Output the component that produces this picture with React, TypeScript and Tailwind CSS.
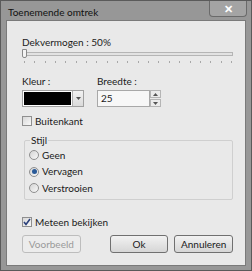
import React from "react";

function Radio({ checked, label }: { checked?: boolean; label: string }) {
  return (
    <div className="flex items-center h-[16.5px]">
      <div className="w-[10px] h-[10px] rounded-full border border-[#8f8f8f] bg-gradient-to-br from-[#d4d4d4] to-[#f8f8f8] flex items-center justify-center">
        {checked && <div className="w-[5px] h-[5px] rounded-full bg-[#2a5a98]" />}
      </div>
      <span className="ml-[3px] text-[10px] text-[#1a1a1a]">{label}</span>
    </div>
  );
}

function Check({ checked, label }: { checked?: boolean; label: string }) {
  return (
    <div className="flex items-center h-[14px]">
      <div className="w-[10px] h-[10px] border border-[#8f8f8f] bg-gradient-to-br from-[#d8d8d8] to-[#f8f8f8] flex items-center justify-center">
        {checked && (
          <svg width="8" height="8" viewBox="0 0 8 8">
            <path d="M1 4 L3 6.5 L7 1" stroke="#2a3f7a" strokeWidth="1.6" fill="none" />
          </svg>
        )}
      </div>
      <span className="ml-[3px] text-[10px] text-[#1a1a1a]">{label}</span>
    </div>
  );
}

export default function App() {
  const ticks = Array.from({ length: 21 }, (_, i) => i);
  return (
    <div
      className="w-[252px] h-[271px] bg-[#979797] border border-[#5a5a5a] flex flex-col"
      style={{ fontFamily: 'Lato, "Liberation Sans", sans-serif' }}
    >
      <div className="h-[19px] flex items-start justify-between pl-[7px] pr-[4px]">
        <span className="text-[10px] leading-[14px] text-[#111] mt-[4px]">Toenemende omtrek</span>
        <div className="w-[38px] h-[16px] border border-[#6a6a6a] border-t-0 rounded-b-[4px] bg-[#a4a4a4] flex items-center justify-center">
          <span className="text-[11px] font-bold text-white leading-none">✕</span>
        </div>
      </div>
      <div className="flex-1 mx-[5px] mb-[4px] border border-[#7a7a7a] bg-[#e9e9e9] pl-[15px] pr-[12px] pt-[14px] flex flex-col">
        <div className="text-[10px] leading-[14px] text-[#1a1a1a]">Dekvermogen : 50%</div>
        <div className="relative h-[9px]">
          <div className="absolute left-0 right-0 top-[3px] h-[4px] border border-[#b5b5b5] bg-[#e2e2e2]" />
          <div className="absolute left-[0px] top-[0px] w-[5px] h-[9px] border border-[#8a8a8a] bg-[#f4f4f4] rounded-b-[2px]" />
        </div>
        <div className="flex justify-between h-[6px] pl-[2px] pr-[1px]">
          {ticks.map((t) => (
            <div key={t} className="w-[1px] h-[2px] mt-[3px] bg-[#a8a8a8]" />
          ))}
        </div>
        <div className="flex mt-[10px]">
          <div className="flex flex-col w-[75px]">
            <span className="text-[10px] leading-[14px] text-[#1a1a1a]">Kleur :</span>
            <div className="mt-[2px] w-[62px] h-[17px] border border-[#a0a0a0] bg-white flex">
              <div className="flex-1 m-[1px] bg-black" />
              <div className="w-[11px] border-l border-[#b0b0b0] bg-gradient-to-b from-[#f2f2f2] to-[#dadada] flex items-center justify-center">
                <svg width="5" height="3" viewBox="0 0 5 3">
                  <path d="M0 0 L5 0 L2.5 3 Z" fill="#555" />
                </svg>
              </div>
            </div>
          </div>
          <div className="flex flex-col">
            <span className="text-[10px] leading-[14px] text-[#1a1a1a]">Breedte :</span>
            <div className="mt-[2px] flex">
              <div className="w-[53px] h-[17px] border border-[#a8a8a8] bg-[#f7f7f7] text-[10px] leading-[15px] pl-[3px] text-[#1a1a1a]">25</div>
              <div className="flex flex-col w-[11px] h-[17px]">
                <div className="h-[8px] border border-[#b5b5b5] bg-[#ececec] flex items-center justify-center">
                  <svg width="5" height="3" viewBox="0 0 5 3"><path d="M0 3 L5 3 L2.5 0 Z" fill="#555" /></svg>
                </div>
                <div className="h-[8px] mt-[1px] border border-[#b5b5b5] bg-[#ececec] flex items-center justify-center">
                  <svg width="5" height="3" viewBox="0 0 5 3"><path d="M0 0 L5 0 L2.5 3 Z" fill="#555" /></svg>
                </div>
              </div>
            </div>
          </div>
        </div>
        <div className="mt-[7px]">
          <Check label="Buitenkant" />
        </div>
        <div className="relative mt-[12px] ml-[2px] h-[60px] border border-[#cfcfcf] rounded-[2px] pl-[4px] pt-[6px] flex flex-col">
          <span className="absolute left-[5px] top-[-8px] px-[1px] bg-[#e9e9e9] text-[10px] leading-[14px] text-[#1a1a1a]">Stijl</span>
          <Radio label="Geen" />
          <Radio checked label="Vervagen" />
          <Radio label="Verstrooien" />
        </div>
        <div className="mt-[15px]">
          <Check checked label="Meteen bekijken" />
        </div>
        <div className="flex mt-[6px]">
          <div className="w-[59px] h-[18px] border border-[#bdbdbd] rounded-[3px] bg-[#ececec] text-[10px] leading-[16px] text-center text-[#9a9a9a]">Voorbeeld</div>
          <div className="ml-[29px] w-[59px] h-[18px] border border-[#707070] rounded-[3px] bg-gradient-to-b from-[#f2f2f2] to-[#d6d6d6] text-[10px] leading-[16px] text-center text-[#1a1a1a]">Ok</div>
          <div className="ml-[6px] w-[59px] h-[18px] border border-[#707070] rounded-[3px] bg-gradient-to-b from-[#f2f2f2] to-[#d6d6d6] text-[10px] leading-[16px] text-center text-[#1a1a1a]">Annuleren</div>
        </div>
      </div>
    </div>
  );
}
